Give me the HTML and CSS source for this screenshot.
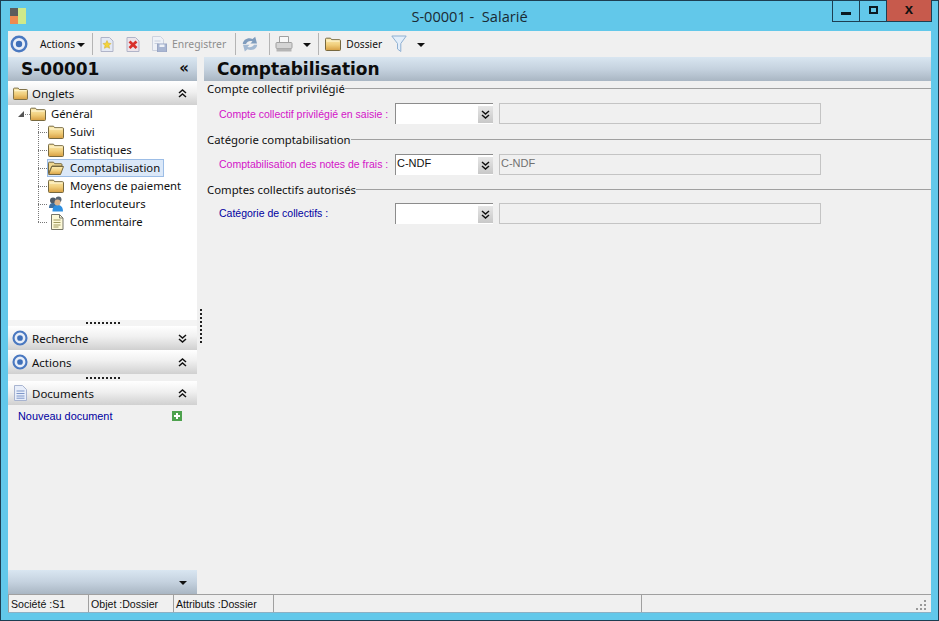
FILE: index.html
```html
<!DOCTYPE html>
<html lang="fr">
<head>
<meta charset="utf-8">
<title>S-00001 - Salarié</title>
<link rel="stylesheet" href="styles.css">
</head>
<body>
<svg class="defs" width="0" height="0" aria-hidden="true">
  <defs>
    <linearGradient id="fold" x1="0" y1="0" x2="0" y2="1"><stop offset="0" stop-color="#fdeeb4"/><stop offset=".55" stop-color="#f0cd7a"/><stop offset="1" stop-color="#d79f42"/></linearGradient>
    <symbol id="folder" viewBox="0 0 16 14">
      <path d="M.5 12.500V2.200q0-1 1-1h4l1.200 1.500h7.800q1 0 1 1v8.800q0 1-1 1h-13q-1 0-1-1z" fill="url(#fold)" stroke="#76683f"/>
      <path d="M1.500 4h13" stroke="#fff8d8"/>
    </symbol>
    <symbol id="folderopen" viewBox="0 0 16 14">
      <path d="M.5 12.500V2.200q0-1 1-1h4l1.200 1.500h6.300q1 0 1 1v1.300H4L.5 12.500z" fill="#f0d890" stroke="#76683f"/>
      <path d="M.7 13.500 3.800 5.500h11.700l-3 8z" fill="url(#fold)" stroke="#76683f"/>
    </symbol>
    <symbol id="target" viewBox="0 0 18 18">
      <circle cx="9" cy="9" r="7.300" fill="#e8eef8" stroke="#4a78c0" stroke-width="2.400"/>
      <circle cx="9" cy="9" r="3.200" fill="#3f6fb8"/>
    </symbol>
    <symbol id="up" viewBox="0 0 9 9"><path d="M1 4 4.500 1 8 4M1 8l3.500-3L8 8" fill="none" stroke="#111" stroke-width="1.500"/></symbol>
    <symbol id="down" viewBox="0 0 9 9"><path d="M1 1l3.500 3L8 1M1 5l3.500 3L8 5" fill="none" stroke="#111" stroke-width="1.500"/></symbol>
    <symbol id="note" viewBox="0 0 14 16">
      <path d="M1.500.5h8l3.500 3.500v11.500h-11.500z" fill="#fdf9d8" stroke="#77776a"/>
      <path d="M9.500.5v3.500h3.500" fill="none" stroke="#77776a"/>
      <path d="M3.500 6h7M3.500 8.500h7M3.500 11h7M3.500 13h5" stroke="#a09a60"/>
    </symbol>
  </defs>
</svg>

<div class="window">
  <header class="titlebar">
    <svg class="appicon" width="16" height="16" viewBox="0 0 16 16" aria-hidden="true">
      <rect width="8" height="8" fill="#5c5c5c"/><rect y="8" width="8" height="8" fill="#ee8a50"/><rect x="8" width="8" height="16" fill="#cfe98a"/>
    </svg>
    <h1 class="wintitle">S-00001 -&nbsp; Salarié</h1>
    <div class="wincontrols">
      <button class="winbtn winmin"><span class="glyph-min"></span></button>
      <button class="winbtn winmax"><span class="glyph-max"></span></button>
      <button class="winbtn winclose">x</button>
    </div>
  </header>

  <div class="client">
    <nav class="toolbar">
      <svg class="tb-target" width="18" height="18"><use href="#target"/></svg>
      <span class="tb-text tb-actions">Actions</span><span class="arrow arrow-tight"></span>
      <span class="tb-sep sep-a"></span>
      <svg class="tb-new" width="14" height="15" viewBox="0 0 14 15">
        <path d="M1 .5h8.500l3.500 3.500v10.500h-12z" fill="#e4e9f4" stroke="#b0b4c8"/><path d="M7 3.500l1.200 2.700 2.800.3-2 2 .6 2.800L7 10 4.400 11.300 5 8.500l-2-2 2.800-.3z" fill="#f4d43a" stroke="#d0a828" stroke-width=".5"/>
      </svg>
      <svg class="tb-del" width="14" height="15" viewBox="0 0 14 15">
        <path d="M1 .5h8.500l3.500 3.500v10.500h-12z" fill="#ece4ea" stroke="#b0b4c8"/><path d="M3.500 4.500l7 6.500M10.500 4.500l-7 6.500" stroke="#d8302c" stroke-width="2.800"/>
      </svg>
      <svg class="tb-save" width="15" height="16" viewBox="0 0 15 16">
        <path d="M.5.500h8l3 3v11H.5z" fill="#eef1f7" stroke="#cdd2de"/><path d="M2.500 5h6M2.500 7.500h4" stroke="#c9d0de"/><rect x="5.500" y="8" width="9" height="8" fill="#a9b6d2" stroke="#9aa6c4"/><rect x="7.500" y="8.500" width="5" height="2.500" fill="#eef1f7"/>
      </svg>
      <span class="tb-text tb-disabled">Enregistrer</span>
      <span class="tb-sep sep-b"></span>
      <svg class="tb-refresh" width="16" height="16" viewBox="0 0 16 16">
        <path d="M.8 8C1 3.500 6.500.800 10.500 3L13.200.8 15 7.500 8.300 7.500 10.500 5.500C8 4.300 5.200 5.300 4 8z" fill="#7f9cbd"/>
        <path d="M15.200 8.800C15 13 9.800 15.500 5.500 13.300L2.800 15.500 1 8.800 7.700 8.800 5.500 10.800C8 12 10.800 11 12 8.800z" fill="#a3b9d2"/>
      </svg>
      <span class="tb-sep sep-c"></span>
      <svg class="tb-print" width="18" height="18" viewBox="0 0 18 18">
        <path d="M4.500 1.500h9v6h-9z" fill="#f8f8f8" stroke="#a0a0a0"/><rect x="1" y="7.500" width="16" height="6" rx="1" fill="#d4d4d4" stroke="#a0a0a0"/><rect x="1.500" y="13.500" width="15" height="3" fill="#b4b4b4"/>
      </svg>
      <span class="arrow arrow-print"></span>
      <span class="tb-sep sep-d"></span>
      <svg class="tb-folder" width="16" height="14"><use href="#folder"/></svg>
      <span class="tb-text tb-dossier">Dossier</span>
      <svg class="tb-funnel" width="16" height="18" viewBox="0 0 16 18">
        <path d="M.8 1h14.400L9.800 8.500V16.500L6.500 14V8.500z" fill="#e3eefa" stroke="#8fb0d2"/>
      </svg>
      <span class="arrow arrow-funnel"></span>
    </nav>

    <div class="workspace">
      <aside class="sidebar">
        <div class="headbar sidehead">
          <span class="headtitle">S-00001</span>
          <span class="collapse">«</span>
        </div>
        <div class="panelhead">
          <svg class="ph-folder" width="15" height="13"><use href="#folder"/></svg>
          <span class="ph-label">Onglets</span>
          <svg class="chev" width="9" height="9"><use href="#up"/></svg>
        </div>
        <div class="tree">
          <div class="tree-root">
            <span class="expander"></span><span class="tree-dash"></span>
            <svg width="16" height="14"><use href="#folder"/></svg>
            <span class="tree-label tree-label-root">Général</span>
          </div>
          <ul class="tree-kids">
            <li class="tree-item"><span class="connector"></span><span class="tree-node"><svg width="16" height="14"><use href="#folder"/></svg><span class="tree-label">Suivi</span></span></li>
            <li class="tree-item"><span class="connector"></span><span class="tree-node"><svg width="16" height="14"><use href="#folder"/></svg><span class="tree-label">Statistiques</span></span></li>
            <li class="tree-item"><span class="connector"></span><span class="tree-node is-selected"><svg width="16" height="14"><use href="#folderopen"/></svg><span class="tree-label">Comptabilisation</span></span></li>
            <li class="tree-item"><span class="connector"></span><span class="tree-node"><svg width="16" height="14"><use href="#folder"/></svg><span class="tree-label">Moyens de paiement</span></span></li>
            <li class="tree-item"><span class="connector"></span><span class="tree-node">
              <svg width="16" height="16" viewBox="0 0 16 16"><circle cx="5" cy="4.500" r="3" fill="#4d5a68"/><circle cx="10.500" cy="3.500" r="3" fill="#5a6674"/><path d="M1 12c0-4 2-5 4-5s4 1 4 5z" fill="#3f6f9f"/><path d="M4.500 15.500c0-5 2-6.500 5-6.500s5.500 1.500 5.500 6.500z" fill="#2f8fe0"/><circle cx="9.500" cy="6.500" r="3" fill="#dcb48c"/></svg>
              <span class="tree-label">Interlocuteurs</span></span></li>
            <li class="tree-item"><span class="connector"></span><span class="tree-node"><svg width="16" height="16" viewBox="-2 0 16 16"><use href="#note" width="14" height="16"/></svg><span class="tree-label">Commentaire</span></span></li>
          </ul>
        </div>
        <div class="gripbar"><span class="hdots"></span></div>
        <div class="panelhead">
          <svg class="ph-target" width="16" height="16"><use href="#target"/></svg>
          <span class="ph-label">Recherche</span>
          <svg class="chev" width="9" height="9"><use href="#down"/></svg>
        </div>
        <div class="panelhead">
          <svg class="ph-target" width="16" height="16"><use href="#target"/></svg>
          <span class="ph-label">Actions</span>
          <svg class="chev" width="9" height="9"><use href="#up"/></svg>
        </div>
        <div class="gripbar gripbar-low"><span class="hdots"></span></div>
        <div class="panelhead">
          <svg class="ph-doc" width="13" height="16" viewBox="0 0 13 16"><path d="M.5.500h8l4 4v11H.5z" fill="#e8eefa" stroke="#a8b4d0"/><path d="M2.500 6h8M2.500 8.500h8M2.500 11h8M2.500 13.200h8" stroke="#7d96c8"/></svg>
          <span class="ph-label">Documents</span>
          <svg class="chev" width="9" height="9"><use href="#up"/></svg>
        </div>
        <div class="docrow">
          <a class="doclink">Nouveau document</a>
          <svg width="10" height="10" viewBox="0 0 10 10"><rect width="10" height="10" fill="#4ea24e"/><path d="M5 2v6M2 5h6" stroke="#fff" stroke-width="2"/></svg>
        </div>
        <div class="sidefill"></div>
        <div class="headbar sidefoot"><span class="arrow"></span></div>
      </aside>

      <div class="splitter"><span class="vdots"></span></div>

      <main class="content">
        <div class="headbar mainhead"><h2 class="headtitle">Comptabilisation</h2></div>
        <section class="group">
          <div class="legend"><span>Compte collectif privilégié</span></div>
          <div class="row">
            <label class="flabel flabel-pink">Compte collectif privilégié en saisie :</label>
            <div class="combo"><span class="combo-val"></span><span class="combo-btn"><svg width="9" height="9"><use href="#down"/></svg></span></div>
            <div class="readonly"></div>
          </div>
        </section>
        <section class="group group-mid">
          <div class="legend"><span>Catégorie comptabilisation</span></div>
          <div class="row">
            <label class="flabel flabel-pink">Comptabilisation des notes de frais :</label>
            <div class="combo"><span class="combo-val">C-NDF</span><span class="combo-btn"><svg width="9" height="9"><use href="#down"/></svg></span></div>
            <div class="readonly">C-NDF</div>
          </div>
        </section>
        <section class="group group-last">
          <div class="legend"><span>Comptes collectifs autorisés</span></div>
          <div class="row">
            <label class="flabel flabel-blue">Catégorie de collectifs :</label>
            <div class="combo"><span class="combo-val"></span><span class="combo-btn"><svg width="9" height="9"><use href="#down"/></svg></span></div>
            <div class="readonly"></div>
          </div>
        </section>
      </main>
    </div>

    <footer class="statusbar">
      <span class="cell cell-1">Société :S1</span>
      <span class="cell cell-2">Objet :Dossier</span>
      <span class="cell cell-3">Attributs :Dossier</span>
      <span class="cell cell-4"></span>
      <span class="cell cell-5">
        <svg class="sizegrip" width="11" height="11" viewBox="0 0 11 11"><path d="M8 0h2v2H8zM4 4h2v2H4zM8 4h2v2H8zM0 8h2v2H0zM4 8h2v2H4zM8 8h2v2H8z" fill="#999"/></svg>
      </span>
    </footer>
  </div>
</div>
</body>
</html>
```
FILE: styles.css
```css
* { box-sizing: border-box; }
html, body { margin: 0; padding: 0; width: 939px; height: 621px; overflow: hidden; }
body { font-family: "Noto Sans", sans-serif; font-size: 12px; color: #111; }
.defs { position: absolute; }
svg { display: block; flex: none; }

.window {
  width: 939px; height: 621px;
  background: #62c8ea;
  border: 1px solid #1d3e52;
  display: flex; flex-direction: column;
  padding: 0 7px 7px 7px;
}
.titlebar { height: 30px; flex: none; display: flex; align-items: center; position: relative; padding-left: 2px; }
.wintitle {
  position: absolute; left: 0; right: 0; top: 5px; margin: 0; text-align: center;
  font-family: "Open Sans", sans-serif; font-size: 14.6px; font-weight: 400; line-height: 20px; color: #1a2a33;
}
.wincontrols { position: absolute; top: -1px; right: -1px; display: flex; height: 22px; border: 1px solid #1d3e52; border-top: 0; }
.winbtn { border: 0; padding: 0; margin: 0; background: transparent; display: flex; align-items: center; justify-content: center; }
.winmin { width: 27px; border-right: 1px solid #1d3e52; }
.winmax { width: 27px; border-right: 1px solid #1d3e52; }
.winclose { width: 44px; background: #c75a4c; font: bold 15px/16px "Liberation Sans", sans-serif; color: #111; padding-bottom: 3px; }
.glyph-min { width: 10px; height: 3px; background: #0b1a22; margin-top: 5px; }
.glyph-max { width: 9px; height: 8px; border: 2px solid #0b1a22; margin-top: -1px; }

.client { flex: 1; min-height: 0; background: #f0f0f0; display: flex; flex-direction: column; border-bottom: 1px solid #8cb0c4; }

.toolbar { height: 26px; flex: none; display: flex; align-items: center; background: #f0f0f0; padding-left: 2px; }
.tb-text { font-size: 10.2px; line-height: 14px; white-space: nowrap; }
.tb-disabled { color: #8d8d8d; margin-left: 5px; font-size: 10.4px; }
.tb-sep { width: 1px; height: 22px; background: #b4b4b4; flex: none; }
.tb-actions { margin-left: 12px; }
.arrow { width: 0; height: 0; border: 4px solid transparent; border-top-color: #111; border-bottom: 0; flex: none; }
.arrow-tight { margin-left: 2px; margin-top: 1px; }
.sep-a { margin-left: 7px; }
.tb-new { margin-left: 7px; }
.tb-del { margin-left: 12px; }
.tb-save { margin-left: 12px; }
.sep-b { margin-left: 9px; }
.tb-refresh { margin-left: 6px; }
.sep-c { margin-left: 11px; }
.tb-print { margin-left: 5px; }
.arrow-print { margin-left: 10px; margin-top: 2px; }
.sep-d { margin-left: 7px; }
.tb-folder { margin-left: 6px; }
.tb-dossier { margin-left: 5px; }
.tb-funnel { margin-left: 9px; }
.arrow-funnel { margin-left: 10px; margin-top: 2px; }

.workspace { flex: 1; min-height: 0; display: flex; }
.sidebar { width: 189px; flex: none; display: flex; flex-direction: column; }
.splitter { width: 7px; flex: none; display: flex; align-items: center; justify-content: center; }
.vdots { width: 2px; height: 34px; background: repeating-linear-gradient(to bottom, #222 0 2px, transparent 2px 4px); }
.content { flex: 1; min-width: 0; display: flex; flex-direction: column; }

.headbar { height: 24px; flex: none; background: linear-gradient(to bottom, #d9e6f1 0%, #c5d2df 50%, #a9b6c3 100%); display: flex; align-items: center; }
.headtitle { font-family: "DejaVu Sans", sans-serif; font-weight: 700; font-size: 17px; line-height: 24px; margin: 0; color: #0c0c0c; }
.sidehead { padding-left: 13px; justify-content: space-between; padding-right: 8px; }
.collapse { font: 700 15px/20px "DejaVu Sans", sans-serif; margin-top: -3px; }
.mainhead { padding-left: 13px; }
.sidefoot { margin-top: auto; justify-content: flex-end; padding-right: 10px; }
.sidefoot .arrow { margin-top: 1px; }

.panelhead { height: 24px; flex: none; display: flex; align-items: center; padding: 0 10px 0 4px; background: linear-gradient(to bottom, #ffffff 0%, #f0f0f0 45%, #d0d0d0 100%); }
.ph-label { font-size: 11.5px; line-height: 16px; margin-left: 4px; margin-top: 2px; flex: 1; }
.ph-folder { margin-left: 1px; }
.ph-doc { margin: 0 1px 0 2px; }

.tree { flex: none; height: 215px; background: #fff; padding-left: 8px; }
.tree-root { display: flex; align-items: center; height: 18px; }
.expander { width: 0; height: 0; border-style: solid; border-width: 0 0 6px 6px; border-color: transparent transparent #555 transparent; margin-left: 2px; }
.tree-dash { width: 5px; border-top: 1px dotted #888; margin: 0 0 0 1px; }
.tree-label { line-height: 16px; white-space: nowrap; font-size: 11.3px; }
.tree-label-root { margin-left: 5px; }
.tree-kids { list-style: none; margin: 0 0 0 22px; padding: 0; position: relative; }
.tree-kids::before { content: ""; position: absolute; left: 0; top: 0; bottom: 9px; border-left: 1px dotted #777; }
.tree-item { display: flex; align-items: center; height: 18px; }
.connector { width: 9px; flex: none; border-top: 1px dotted #777; }
.tree-node { display: flex; align-items: center; gap: 6px; height: 18px; padding: 0 4px 0 1px; }
.tree-node.is-selected { background: #dbe8f8; box-shadow: inset 0 0 0 1px #9cbde6; }

.gripbar { height: 6px; flex: none; background: #f4f4f4; display: flex; align-items: center; justify-content: center; }
.gripbar-low { height: 7px; background: #f0f0f0; }
.hdots { width: 34px; height: 2px; background: repeating-linear-gradient(to right, #222 0 2px, transparent 2px 4px); }

.docrow { height: 22px; flex: none; display: flex; align-items: center; justify-content: space-between; padding: 0 15px 0 10px; }
.doclink { color: #0000a0; font-family: "Liberation Sans", sans-serif; font-size: 10.9px; line-height: 14px; }
.sidefill { flex: 1; }

.group { height: 51px; flex: none; padding-left: 3px; }
.group-mid { height: 50px; }
.group-last { height: 50px; }
.group-last .row { margin-top: 7px; }
.legend { display: flex; align-items: center; height: 14px; font-size: 11.35px; line-height: 14px; white-space: nowrap; }
.legend span { margin-top: 1px; }
.legend::after { content: ""; flex: 1; height: 1px; background: #a0a0a0; }
.row { display: flex; align-items: flex-start; margin-top: 8px; }
.flabel { width: 181px; padding-left: 12px; font-family: "Liberation Sans", sans-serif; font-size: 10.5px; line-height: 21px; white-space: nowrap; }
.group:first-of-type .flabel { line-height: 22px; }
.flabel-pink { color: #d313c8; }
.flabel-blue { color: #0000a0; }
.combo { width: 98px; height: 21px; margin-left: 7px; background: #fff; border-top: 1px solid #8c8c8c; border-left: 1px solid #8c8c8c; display: flex; align-items: center; }
.combo-val { flex: 1; padding-left: 1px; font-family: "Liberation Sans", sans-serif; font-size: 11px; line-height: 15px; margin-top: -3px; }
.combo-btn { width: 15px; height: 17px; background: linear-gradient(to bottom, #e6e6e6, #c8c8c8); display: flex; align-items: center; justify-content: center; }
.readonly { width: 322px; height: 21px; margin-left: 6px; background: #f0f0f0; border: 1px solid #c4c4c4; padding-left: 1px; color: #707070; font-family: "Liberation Sans", sans-serif; font-size: 11px; line-height: 16px; }

.statusbar { height: 18px; flex: none; display: flex; background: #f0f0f0; border-top: 1px solid #a0a0a0; font-family: "Liberation Sans", sans-serif; font-size: 10.6px; line-height: 17px; }
.cell { border-right: 1px solid #a0a0a0; padding: 1px 0 0 2px; white-space: nowrap; flex: none; }
.statusbar .cell:first-child { border-left: 1px solid #a0a0a0; }
.cell-1 { width: 81px; }
.cell-2 { width: 85px; }
.cell-3 { width: 100px; }
.cell-4 { width: 368px; }
.cell-5 { flex: 1; border-right: 0; display: flex; justify-content: flex-end; align-items: flex-end; padding: 0 4px 1px 0; }
```
